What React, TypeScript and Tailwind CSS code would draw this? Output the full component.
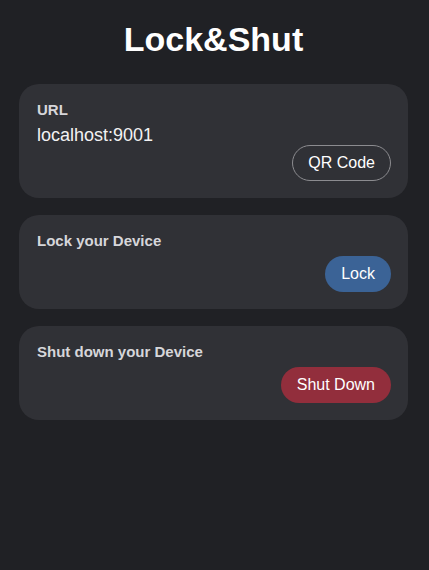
import React from "react";

/* ── Card shell ──────────────────────────────────── */
function Card({ children }: { children: React.ReactNode }) {
  return (
    <section className="rounded-[20px] bg-[#303136] py-[17px] pl-[18px] pr-[17px] flex flex-col">
      {children}
    </section>
  );
}

function Label({ text }: { text: string }) {
  return (
    <h3 className="text-[15px] font-bold leading-[17px] text-[#d6d6da] mb-[7px]">
      {text}
    </h3>
  );
}

export default function App() {
  return (
    <main
      className="min-h-[570px] bg-[#202125] text-white pl-[19px] pr-[21px] pt-[20px]"
      style={{ fontFamily: '"Liberation Sans", Arial, sans-serif' }}
    >
      <h1 className="text-center text-[34px] font-bold leading-[39px] mb-[25px]">
        Lock&amp;Shut
      </h1>

      <div className="flex flex-col gap-[17px]">
        {/* URL */}
        <Card>
          <Label text="URL" />
          <p className="text-[18px] leading-[20px] text-[#f2f2f2]">localhost:9001</p>
          <div className="flex justify-end">
            <button
              type="button"
              className="rounded-full border border-[#8c8c90] px-[15px] py-2 text-[16px] leading-[18px] text-white"
            >
              QR Code
            </button>
          </div>
        </Card>

        {/* Lock */}
        <Card>
          <Label text="Lock your Device" />
          <div className="flex justify-end">
            <button
              type="button"
              className="rounded-full border border-transparent bg-[#3b6396] px-[15px] py-2 text-[16px] leading-[18px] text-white"
            >
              Lock
            </button>
          </div>
        </Card>

        {/* Shut down */}
        <Card>
          <Label text="Shut down your Device" />
          <div className="flex justify-end">
            <button
              type="button"
              className="rounded-full border border-transparent bg-[#922e3c] px-[15px] py-2 text-[16px] leading-[18px] text-white"
            >
              Shut Down
            </button>
          </div>
        </Card>
      </div>
    </main>
  );
}
